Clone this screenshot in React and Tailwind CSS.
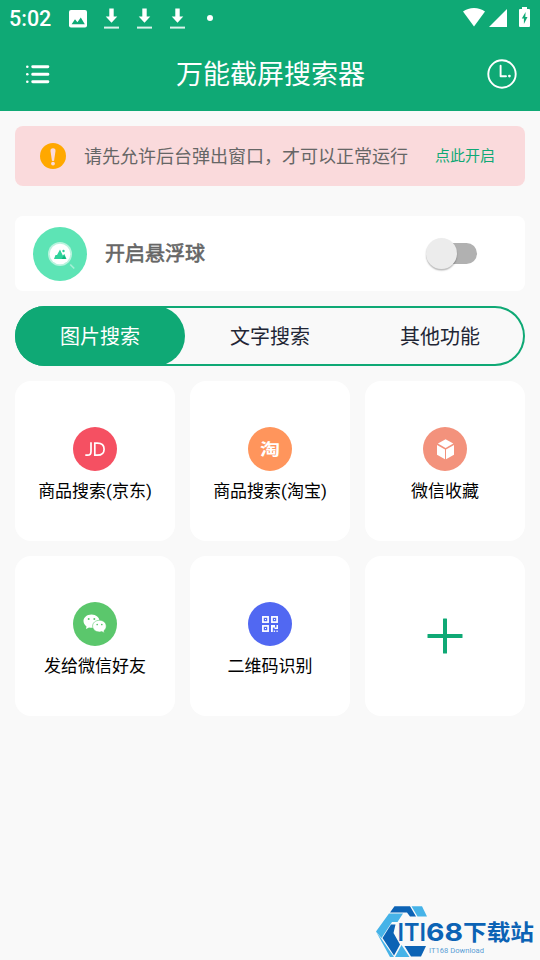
import React from 'react';

const TABS = ['图片搜索', '文字搜索', '其他功能'];

const DownloadIcon = () => (
  <svg className="w-[15px] h-[21px]" viewBox="0 0 15 21" fill="#fff">
    <path d="M5.3 0.5h4.4v8h3.6l-5.8 6.3l-5.8-6.3h3.6z" />
    <rect x="0" y="18.6" width="15" height="2" opacity="0.85" />
  </svg>
);

const StatusBar = () => (
  <div className="h-9 flex items-start justify-between pl-[9px] pr-[10px] text-white">
    <div className="flex items-start">
      <span className="w-[60px] pt-[6px] text-[21.5px] leading-[26px] font-medium">5:02</span>
      <svg className="w-[18px] h-[18px] mt-[10px]" viewBox="0 0 18 18">
        <rect width="18" height="17.4" rx="2" fill="#fff" />
        <path d="M2.6 14.3l3.4-5l2.4 3l3.4-4.8l4 6.8z" fill="#0fa975" />
      </svg>
      <div className="flex gap-[18px] ml-[17px] mt-2">
        <DownloadIcon />
        <DownloadIcon />
        <DownloadIcon />
      </div>
      <span className="w-[6px] h-[6px] ml-[22px] mt-[15px] rounded-full bg-white" />
    </div>
    <div className="flex items-start">
      <svg className="w-[22px] h-[19px] mt-2" viewBox="0 0 22 19" fill="#fff">
        <path d="M0 3.6C6-1.2 16-1.2 22 3.6L11 18.6z" />
      </svg>
      <svg className="w-[18px] h-[18px] ml-1 mt-[9px]" viewBox="0 0 18 18" fill="#fff">
        <path d="M18 0v18H0z" />
      </svg>
      <svg className="w-[11px] h-[20px] ml-3 mt-[7px]" viewBox="0 0 11 20">
        <path d="M3 0h5v2h2q1 0 1 1v16q0 1-1 1H1q-1 0-1-1V3q0-1 1-1h2z" fill="#fff" />
        <path d="M6.6 5L2.8 11.6h2.1V17L8.5 10H6.3z" fill="#0fa975" />
      </svg>
    </div>
  </div>
);

const Header = () => (
  <header className="h-[111px] bg-[#0fa975]">
    <StatusBar />
    <div className="h-[75px] pt-px flex items-center justify-between pl-[26px] pr-[23px] text-white">
      <svg className="w-7 h-[19px]" viewBox="0 0 28 19" fill="#fff">
        <circle cx="1.3" cy="1.7" r="1.3" />
        <circle cx="1.3" cy="9.3" r="1.3" />
        <circle cx="1.3" cy="16.7" r="1.3" />
        <rect x="5.3" y="0.2" width="18" height="3" rx="1.4" />
        <rect x="5.3" y="7.8" width="18" height="3" rx="1.4" />
        <rect x="5.3" y="15.2" width="18" height="3" rx="1.4" />
      </svg>
      <h1 className="pt-px text-[27px] leading-[40px]">万能截屏搜索器</h1>
      <svg className="w-[30px] h-[30px]" viewBox="0 0 30 30" fill="none" stroke="#fff" strokeWidth="1.9">
        <circle cx="15" cy="15" r="13.7" />
        <path d="M13.6 6.8v10.5h5.4" strokeLinecap="round" strokeLinejoin="round" />
        <circle cx="22.4" cy="17.1" r="1.4" fill="#fff" stroke="none" />
      </svg>
    </div>
  </header>
);

const Notice = () => (
  <div className="h-[60px] flex items-center rounded-lg bg-[#fadadc] pl-[25px] pr-[30px]">
    <svg className="w-[26px] h-[26px]" viewBox="0 0 26 26">
      <circle cx="13" cy="13" r="13" fill="#ffa800" />
      <path d="M13 5.2q2.8 0 2.5 2.8l-1.4 9.4q-1.1 1-2.2 0L10.5 8q-.3-2.8 2.5-2.8z" fill="#fadadc" />
      <circle cx="13" cy="20.6" r="1.9" fill="#fadadc" />
    </svg>
    <p className="ml-[18px] flex-1 text-[18px] leading-[27px] text-[#666] whitespace-nowrap">请先允许后台弹出窗口，才可以正常运行</p>
    <button className="text-[15px] leading-[22px] text-[#0fa975] whitespace-nowrap">点此开启</button>
  </div>
);

const FloatBall = () => (
  <div className="h-[75px] mt-[30px] flex items-center rounded-lg bg-white pl-[18px] pr-[48px]">
    <svg className="w-[54px] h-[54px]" viewBox="0 0 54 54">
      <circle cx="27" cy="27" r="27" fill="#5de4b5" />
      <circle cx="27" cy="27" r="12" fill="#baf3de" />
      <circle cx="27" cy="27" r="10.3" fill="#fff" />
      <path d="M21 32l1.5-4h1.5l3-5.5l2.8 6l1.6-1.5l2.1 5z" fill="#2fd29a" />
      <path d="M28.5 32l2.7-3.5L33 32z" fill="#0fb57c" />
      <circle cx="30.5" cy="24" r="1.2" fill="#2fd29a" />
      <path d="M37.2 37.5l4 4" stroke="#a6efd5" strokeWidth="1.7" />
    </svg>
    <span className="ml-[18px] flex-1 text-[20px] leading-[30px] text-[#666] [-webkit-text-stroke:0.6px_#666]">开启悬浮球</span>
    <div className="relative w-[51px] h-[31px]">
      <div className="ml-[11px] mt-[5px] w-10 h-[21px] rounded-full bg-[#b1b1b1]" />
      <div className="absolute left-0 top-0 w-[31px] h-[31px] rounded-full bg-[#ececec] shadow-[0_1.5px_1.5px_rgba(0,0,0,0.28)]" />
    </div>
  </div>
);

const Tabs = () => (
  <div className="h-[60px] mt-[15px] grid grid-cols-3 rounded-full shadow-[inset_0_0_0_2px_#0fa975]">
    {TABS.map((tab, i) => (
      <button
        key={tab}
        className={
          i === 0
            ? 'pt-0.5 rounded-full bg-[#0fa975] text-[20px] text-white'
            : 'pt-0.5 text-[20px] text-[#222635]'
        }
      >
        {tab}
      </button>
    ))}
  </div>
);

const JdIcon = () => (
  <svg className="w-11 h-11" viewBox="0 0 44 44" fill="none" stroke="#fff" strokeWidth="1.7">
    <circle cx="22" cy="22" r="22" fill="#f55062" stroke="none" />
    <path d="M18 15.3v9.2q0 3.7-3.4 3.7h-2.3" />
    <path d="M21.8 16.2h2.6q6.7 0 6.7 6t-6.7 6h-2.6z" />
  </svg>
);

const TaoIcon = () => (
  <div className="w-11 h-11 flex items-center justify-center rounded-full bg-[#ff955c]">
    <span className="text-[20px] leading-none font-bold text-white scale-y-[0.78] translate-y-px">淘</span>
  </div>
);

const BoxIcon = () => (
  <svg className="w-11 h-11" viewBox="0 0 44 44">
    <circle cx="22" cy="22" r="22" fill="#f3927c" />
    <path d="M22.6 12.3l7.7 4.2l-7.7 4.5l-7.7-4.5z" fill="#fff" />
    <path d="M14 18l8 4.5v9.7l-8-4.5z" fill="#fff" />
    <path d="M31 18l-8 4.5v9.7l8-4.5z" fill="#fff" />
  </svg>
);

const WechatIcon = () => (
  <svg className="w-11 h-11" viewBox="0 0 44 44">
    <circle cx="22" cy="22" r="22" fill="#5bc76c" />
    <path d="M18.5 12.5c-4.6 0-8 2.9-8 6.6c0 2.2 1.2 4.1 3 5.3l-.5 2.6l3-1.5q1.2.3 2.5.3c4.6 0 8-2.9 8-6.6s-3.4-6.7-8-6.7z" fill="#fff" />
    <path d="M26.5 18.3c-4 0-6.9 2.5-6.9 5.8s2.9 5.9 6.9 5.9q1.2 0 2.3-.4l2.5 1.4l-.4-2.2c1.5-1.1 2.3-2.8 2.3-4.7c0-3.3-2.8-5.8-6.7-5.8z" fill="#fff" stroke="#5bc76c" strokeWidth="0.6" />
    <g fill="#5bc76c">
      <circle cx="15.7" cy="16.9" r="1" />
      <circle cx="21.3" cy="16.9" r="1" />
      <circle cx="24.2" cy="22.5" r="0.85" />
      <circle cx="28.8" cy="22.5" r="0.85" />
    </g>
  </svg>
);

const QrIcon = () => (
  <svg className="w-11 h-11" viewBox="0 0 44 44">
    <circle cx="22" cy="22" r="22" fill="#5168f2" />
    <g fill="none" stroke="#fff" strokeWidth="1.7">
      <rect x="14.9" y="14.9" width="5.2" height="5.2" />
      <rect x="23.9" y="14.9" width="5.2" height="5.2" />
      <rect x="14.9" y="23.9" width="5.2" height="5.2" />
    </g>
    <g fill="#fff">
      <rect x="17" y="17" width="1" height="1" />
      <rect x="26" y="17" width="1" height="1" />
      <rect x="17" y="26" width="1" height="1" />
      <path d="M23 23h4v2.5h1.5V23H30v4h-3.5v-1.5h-1.7V30H23z" />
      <rect x="25.7" y="28.5" width="1.4" height="1.4" />
      <rect x="28.4" y="28.5" width="1.4" height="1.4" />
    </g>
  </svg>
);

const FEATURES = [
  { label: '商品搜索(京东)', Icon: JdIcon },
  { label: '商品搜索(淘宝)', Icon: TaoIcon },
  { label: '微信收藏', Icon: BoxIcon },
  { label: '发给微信好友', Icon: WechatIcon },
  { label: '二维码识别', Icon: QrIcon },
];

const FeatureGrid = () => (
  <div className="grid grid-cols-3 gap-[15px] mt-[15px]">
    {FEATURES.map(({ label, Icon }) => (
      <div key={label} className="h-40 flex flex-col items-center pt-[46px] rounded-2xl bg-white">
        <Icon />
        <span className="mt-2 text-[17px] leading-[25px] text-black whitespace-nowrap">{label}</span>
      </div>
    ))}
    <div className="h-40 flex items-center justify-center rounded-2xl bg-white">
      <svg className="w-9 h-9" viewBox="0 0 36 36" fill="#0fa975">
        <rect x="16" y="0.5" width="4" height="35" rx="0.5" />
        <rect x="0.5" y="16" width="35" height="4" rx="0.5" />
      </svg>
    </div>
  </div>
);

// Download site badge, pinned over the bottom right corner
const SiteBadge = () => (
  <svg className="absolute right-0 bottom-0 w-[175px] h-[65px]" viewBox="0 0 175 65">
    <path d="M29.5 11.3H45l6 10.2h-6l-3-4H25z" fill="#0c63b5" />
    <path d="M46.5 11.3h10.5l5 10.200h-9.500z" fill="#46b3e8" />
    <path d="M24 18.500h14l-5.500 8.500h-5.500L16.500 43L11 36.500z" fill="#46b3e8" />
    <path d="M22.500 35l3.500-5.500h4.500L28.500 38l6.500 11.500l-6 11L17.500 43z" fill="#0c63b5" />
    <path d="M11 36.500l5.500 7.500L29 62h-4z" fill="#46b3e8" />
    <path d="M36.500 50l8 12H30z" fill="#46b3e8" />
    <path d="M39.500 51h21.500l-5 10.500H46z" fill="#0c63b5" />
    <g fill="#0c63b5" className="font-[Inter,'Noto_Sans_CJK_SC',sans-serif]">
      <text x="32.5" y="45.7" fontSize="24.5" fontWeight="600" textLength="28.5" lengthAdjust="spacingAndGlyphs">ITI</text>
      <text x="61" y="45.7" fontSize="24.5" fontWeight="700" textLength="37" lengthAdjust="spacingAndGlyphs">68</text>
      <text x="98" y="44.5" fontSize="22" fontWeight="700" textLength="71" lengthAdjust="spacingAndGlyphs">下载站</text>
    </g>
    <text x="64" y="58" fontSize="7.3" fill="#5a9fd6" textLength="55" lengthAdjust="spacingAndGlyphs">IT168 Download</text>
  </svg>
);

const App = () => {
  return (
    <div className="relative w-full h-[960px] overflow-hidden bg-[#f9f9f9] font-[Roboto,'Noto_Sans_CJK_SC',sans-serif]">
      <Header />
      <main className="px-[15px] pt-[15px]">
        <Notice />
        <FloatBall />
        <Tabs />
        <FeatureGrid />
      </main>
      <SiteBadge />
    </div>
  );
};

export default App;
